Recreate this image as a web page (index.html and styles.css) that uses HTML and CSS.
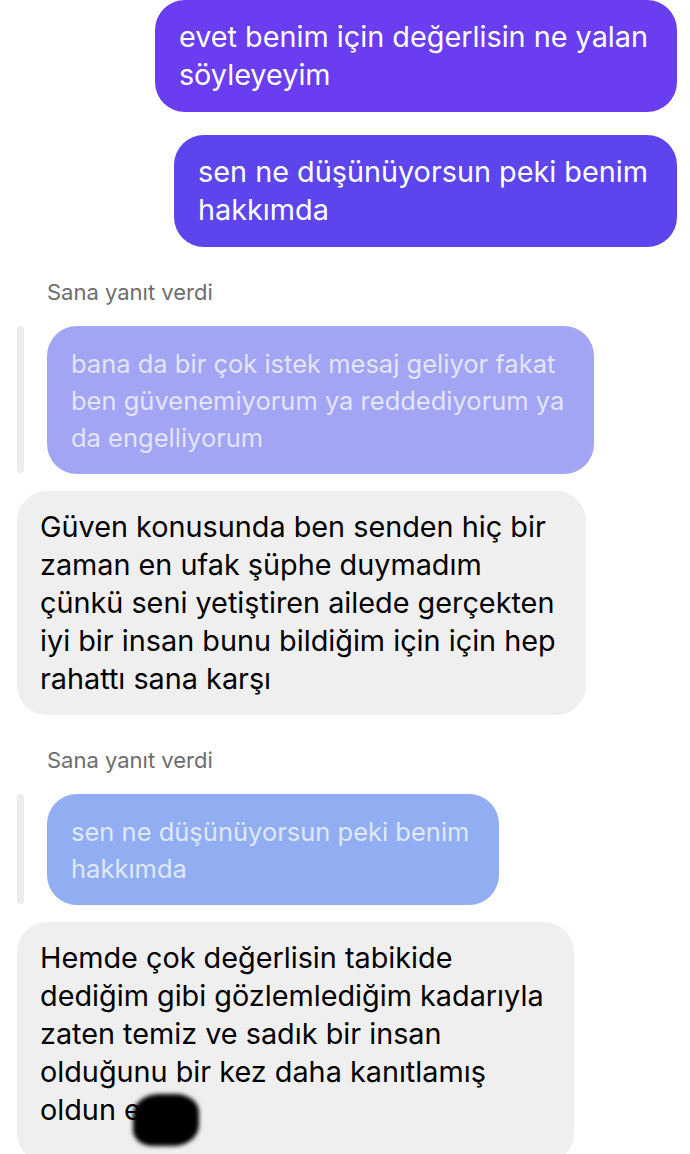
FILE: index.html
```html
<!DOCTYPE html>
<html lang="tr">

<head>
    <meta charset="UTF-8">
    <meta name="viewport" content="width=device-width, initial-scale=1.0">
    <title>Mesajlar</title>

    <link rel="stylesheet" href="styles.css">
</head>

<body>
    <div class="chat">
        <div class="msg msg-out msg-out-1">
            evet benim için değerlisin ne yalan<br>söyleyeyim
        </div>
        <div class="msg msg-out msg-out-2 gap-sm">
            sen ne düşünüyorsun peki benim<br>hakkımda
        </div>

        <p class="reply-label">Sana yanıt verdi</p>
        <div class="quote">
            <div class="quote-bar"></div>
            <div class="msg quoted quoted-violet">
                bana da bir çok istek mesaj geliyor fakat<br>ben güvenemiyorum ya reddediyorum ya<br>da engelliyorum
            </div>
        </div>
        <div class="msg msg-in">
            Güven konusunda ben senden hiç bir<br>zaman en ufak şüphe duymadım<br>çünkü seni yetiştiren ailede gerçekten<br>iyi bir insan bunu bildiğim için için hep<br>rahattı sana karşı
        </div>

        <p class="reply-label">Sana yanıt verdi</p>
        <div class="quote">
            <div class="quote-bar"></div>
            <div class="msg quoted quoted-blue">
                sen ne düşünüyorsun peki benim<br>hakkımda
            </div>
        </div>
        <div class="msg msg-in">
            Hemde çok değerlisin tabikide<br>dediğim gibi gözlemlediğim kadarıyla<br>zaten temiz ve sadık bir insan<br>olduğunu bir kez daha kanıtlamış<br>oldun e<span class="scribble"></span>
        </div>
    </div>
</body>

</html>
```

FILE: styles.css
```css
body {
    margin: 0;
    background: #ffffff;
    font-family: 'Inter', 'Liberation Sans', sans-serif;
    color: #000;
}

.chat {
    display: flex;
    flex-direction: column;
    padding: 0 13px 4px 17px;
}

.msg {
    width: fit-content;
    border-radius: 30px;
    font-size: 28.8px;
    line-height: 38px;
}

.msg-out {
    align-self: flex-end;
    color: #ffffff;
    padding: 18px 29px 18px 24px;
}

.msg-out-1 {
    background: #6a3df1;
}

.msg-out-2 {
    background: #5d45ee;
}

.gap-sm {
    margin-top: 23px;
}

.reply-label {
    margin: 33px 0 22px 30px;
    font-size: 22px;
    line-height: 24px;
    color: #6e6e6e;
}

.quote {
    display: flex;
    gap: 23px;
    align-items: stretch;
}

.quote-bar {
    width: 7px;
    border-radius: 4px;
    background: #ededed;
    margin-bottom: 1px;
}

.quoted {
    font-size: 25.5px;
    line-height: 37px;
    color: rgba(255, 255, 255, 0.72);
    padding: 19px 30px 18px 24px;
}

.quoted-violet {
    background: #a2a5f4;
}

.quoted-blue {
    background: #92aef2;
}

.msg-in {
    margin-top: 17px;
    background: #efefef;
    padding: 17px 30px 17px 23px;
}

.scribble {
    display: inline-block;
    width: 66px;
    height: 52px;
    margin-left: -8px;
    vertical-align: -26px;
    background: #000;
    border-radius: 40% 35% 40% 30%;
    filter: blur(2px);
}
```
